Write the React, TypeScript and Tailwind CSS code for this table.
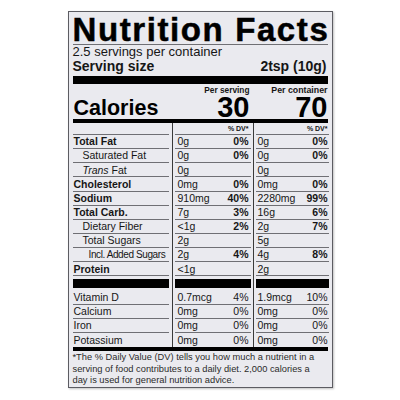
import React from "react";

type Row = {
  label: React.ReactNode;
  bold?: boolean;
  indent?: 0 | 1 | 2;
  a: string;
  ap: string;
  b: string;
  bp: string;
  light?: boolean;
  last?: boolean;
};

const rows: Row[] = [
  { label: "Total Fat", bold: true, a: "0g", ap: "0%", b: "0g", bp: "0%" },
  { label: "Saturated Fat", indent: 1, a: "0g", ap: "0%", b: "0g", bp: "0%" },
  { label: <span><i>Trans</i> Fat</span>, indent: 1, a: "0g", ap: "", b: "0g", bp: "" },
  { label: "Cholesterol", bold: true, a: "0mg", ap: "0%", b: "0mg", bp: "0%" },
  { label: "Sodium", bold: true, a: "910mg", ap: "40%", b: "2280mg", bp: "99%" },
  { label: "Total Carb.", bold: true, a: "7g", ap: "3%", b: "16g", bp: "6%" },
  { label: "Dietary Fiber", indent: 1, a: "<1g", ap: "2%", b: "2g", bp: "7%" },
  { label: "Total Sugars", indent: 1, a: "2g", ap: "", b: "5g", bp: "" },
  { label: "Incl. Added Sugars", indent: 2, a: "2g", ap: "4%", b: "4g", bp: "8%" },
  { label: "Protein", bold: true, a: "<1g", ap: "", b: "2g", bp: "" },
];

const vitamins: Row[] = [
  { label: "Vitamin D", a: "0.7mcg", ap: "4%", b: "1.9mcg", bp: "10%", light: true },
  { label: "Calcium", a: "0mg", ap: "0%", b: "0mg", bp: "0%", light: true },
  { label: "Iron", a: "0mg", ap: "0%", b: "0mg", bp: "0%", light: true },
  { label: "Potassium", a: "0mg", ap: "0%", b: "0mg", bp: "0%", light: true, last: true },
];

function TableRow({ row }: { row: Row }) {
  const line = row.last ? "" : "border-b border-[#6f6f74]";
  const pct = row.light ? "font-normal" : "font-bold";
  return (
    <div className="grid grid-cols-[100px_81px_75px] h-[14.15px] text-[10.5px] leading-none">
      <div className="border-r border-[#3a3a3a] pr-[3px]">
        <div
          className={`h-full flex items-center ${line} ${row.bold ? "font-bold" : ""} ${
            row.indent === 1 ? "pl-[10px]" : row.indent === 2 ? "pl-[16px] text-[10px] tracking-[-0.4px]" : "pl-[1px]"
          }`}
        >
          {row.label}
        </div>
      </div>
      <div className="border-r border-[#3a3a3a] px-[2px]">
        <div className={`h-full flex items-center justify-between pl-[3px] pr-[2px] ${line}`}>
          <span>{row.a}</span>
          <span className={pct}>{row.ap}</span>
        </div>
      </div>
      <div className="pl-[2px]">
        <div className={`h-full flex items-center justify-between pl-[2px] pr-[1px] ${line}`}>
          <span>{row.b}</span>
          <span className={pct}>{row.bp}</span>
        </div>
      </div>
    </div>
  );
}

export default function App() {
  return (
    <div className="w-[400px] h-[400px] bg-white pt-[11px] font-['Liberation_Sans',Arial,sans-serif] text-[#161616]">
      <div className="mx-auto w-[265px] h-[377px] border border-[#5c5c62] bg-[#eaeaef] px-[4px] shadow-[1px_1px_2px_rgba(0,0,0,0.25)]">
        {/* title */}
        <div className="pt-[4px] border-b border-[#6f6f74]">
          <h1 className="text-[33px] leading-[28px] font-bold tracking-[1.6px] text-black [-webkit-text-stroke:0.5px_#000] whitespace-nowrap">
            Nutrition Facts
          </h1>
        </div>
        <p className="text-[13px] leading-[14px]">2.5 servings per container</p>
        <div className="flex justify-between text-[14px] leading-[15px] font-bold">
          <span>Serving size</span>
          <span className="pr-[1px]">2tsp (10g)</span>
        </div>
        <div className="mt-[2px] h-[8px] bg-black" />

        {/* calories */}
        <div className="grid grid-cols-[100px_81px_75px] mt-[2px]">
          <div className="flex items-end">
            <span className="pl-[1px] text-[21.5px] leading-[22px] font-bold text-black">Calories</span>
          </div>
          <div className="flex flex-col items-end pr-[4px]">
            <span className="text-[8.3px] leading-[9px] font-bold">Per serving</span>
            <span className="text-[29px] leading-[24px] font-bold text-black">30</span>
          </div>
          <div className="flex flex-col items-end pr-[1px]">
            <span className="text-[8.8px] leading-[9px] font-bold">Per container</span>
            <span className="text-[29px] leading-[24px] font-bold text-black">70</span>
          </div>
        </div>
        <div className="h-[4px] bg-black" />

        {/* table */}
        <div className="grid grid-cols-[100px_81px_75px] h-[12px] text-[7px] leading-none font-bold">
          <div className="border-r border-[#3a3a3a] pr-[3px]">
            <div className="h-full border-b border-[#6f6f74]" />
          </div>
          <div className="border-r border-[#3a3a3a] px-[2px]">
            <div className="h-full flex items-center justify-end pr-[2px] border-b border-[#6f6f74]">% DV*</div>
          </div>
          <div className="pl-[2px]">
            <div className="h-full flex items-center justify-end pr-[1px] border-b border-[#6f6f74]">% DV*</div>
          </div>
        </div>
        {rows.map((r, i) => (
          <TableRow key={i} row={r} />
        ))}
        <div className="grid grid-cols-[100px_81px_75px] h-[14.15px]">
          <div className="border-r border-[#3a3a3a] pr-[3px] flex items-center">
            <div className="w-full h-[9px] bg-black" />
          </div>
          <div className="border-r border-[#3a3a3a] px-[2px] flex items-center">
            <div className="w-full h-[9px] bg-black" />
          </div>
          <div className="pl-[2px] flex items-center">
            <div className="w-full h-[9px] bg-black" />
          </div>
        </div>
        {vitamins.map((r, i) => (
          <TableRow key={i} row={r} />
        ))}
        <div className="h-[4px] bg-black" />

        {/* footnote */}
        <p className="pt-[1px] text-[9.3px] leading-[11.5px] text-[#2a2a2a]">
          *The % Daily Value (DV) tells you how much a nutrient in a
          <br />
          serving of food contributes to a daily diet. 2,000 calories a
          <br />
          day is used for general nutrition advice.
        </p>
      </div>
    </div>
  );
}
